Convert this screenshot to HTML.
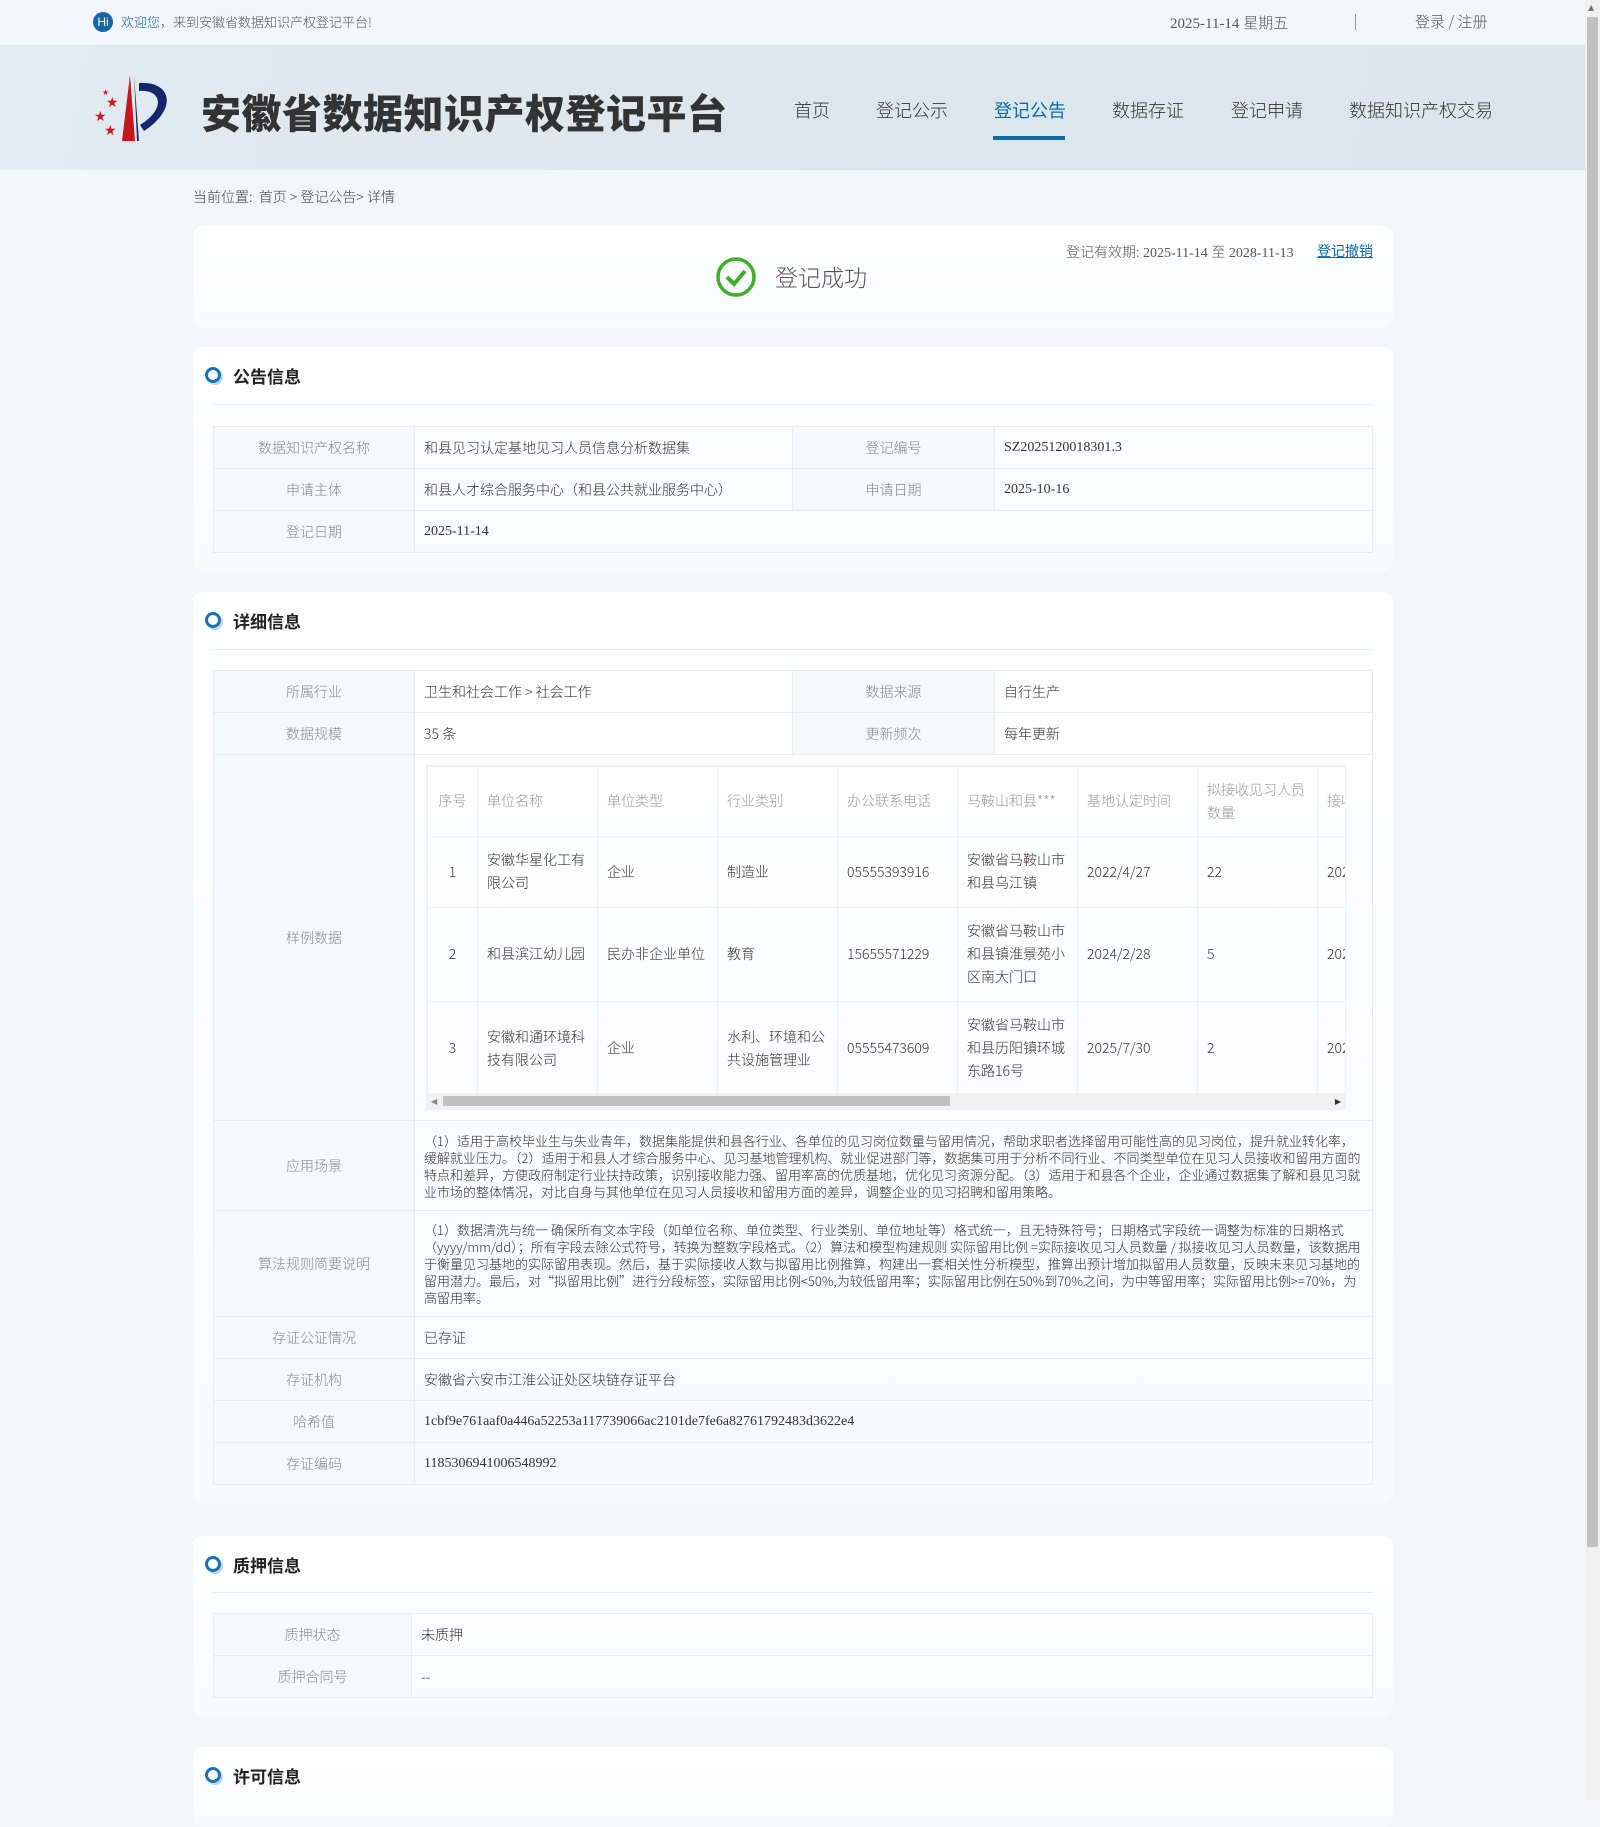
<!DOCTYPE html>
<html><head><meta charset="utf-8">
<style>
*{margin:0;padding:0;box-sizing:border-box}
body{width:1600px;height:1800px;overflow:hidden;background:#f3f6fa;font-family:"Liberation Serif","Noto Sans CJK SC",serif;color:#333;position:relative}
.cjk{font-family:"Noto Sans CJK SC","Liberation Sans",sans-serif}
.abs{position:absolute}
.top{position:absolute;left:0;top:0;width:1585px;height:45px;background:#f3f6fa;font-size:14px}
.hdr{position:absolute;left:0;top:45px;width:1585px;height:125px;background:linear-gradient(100deg,#e3ebf2 0%,#dde7ee 40%,#dbe5ec 100%)}
.nav{position:absolute;top:97px;font-size:18px;color:#333;font-family:"Noto Sans CJK SC",sans-serif;font-weight:300;white-space:nowrap}
.card{position:absolute;left:193px;width:1200px;background:linear-gradient(#fff,#f8fafd);border-radius:10px}
.ttl{position:absolute;left:20px;font-size:17px;font-weight:bold;color:#222;font-family:"Noto Sans CJK SC",sans-serif}
.ttl i{position:absolute;left:-8px;top:4px;width:16px;height:16px;border-radius:50%;border:3px solid #1a73b5;box-shadow:2px 2px 0 #b9d5ec}
.ttl span{margin-left:20px}
.hl{position:absolute;left:20px;width:1160px;height:1px;background:#e6ebf0}
table.g{position:absolute;left:20px;width:1160px;border-collapse:collapse;font-size:14px;font-family:"Noto Sans CJK SC",sans-serif;font-weight:300}
table.g td{border:1px solid #e7ecf1;padding:0 9px;color:#333;height:42px}
table.g td.l{background:#f5f9fc;color:#888;text-align:center}
.scene{font-size:13px;line-height:17px;padding:6px 9px!important;color:#333}
table.s{border-collapse:collapse;font-size:14px;font-family:"Noto Sans CJK SC",sans-serif;font-weight:300;table-layout:fixed;width:1040px}
table.s td{border:1px solid #eef1f4;padding:0 9px;line-height:23px;color:#333;vertical-align:middle}
table.s tr.h td{color:#999;height:70px}
</style></head><body>
<div class="top">
  <div class="abs" style="left:93px;top:12px;width:20px;height:20px;border-radius:50%;background:#1565a8;color:#fff;font:12px 'Liberation Sans',sans-serif;line-height:20px;text-align:center">Hi</div>
  <div class="abs cjk" style="left:121px;top:12px;font-size:13px;color:#555;font-weight:300"><span style="color:#1565a8">欢迎您</span>，来到安徽省数据知识产权登记平台!</div>
  <div class="abs" style="left:1170px;top:12px;font-size:15px;color:#555">2025-11-14 <span class="cjk" style="font-weight:300">星期五</span></div>
  <div class="abs" style="left:1355px;top:14px;width:1px;height:16px;background:#999"></div>
  <div class="abs cjk" style="left:1415px;top:11px;font-size:15px;color:#555;font-weight:300">登录 / 注册</div>
</div>
<div class="hdr">
  <svg class="abs" style="left:92px;top:28px" width="86" height="70" viewBox="0 0 86 70">
    <path d="M38 2 L43 68 L30 68 Z" fill="#c8161d"/>
    <path d="M42 2 L47 68 L45 68 Z" fill="#1a2a6e"/>
    <path d="M47 10 C80 8 86 36 52 58 L48 52 C74 36 70 16 47 18 Z" fill="#16266b"/>
    <g fill="#d4141b" font-size="14" font-family="DejaVu Sans">
      <text x="14" y="34">★</text><text x="2" y="48">★</text><text x="12" y="62">★</text><text x="10" y="22" font-size="8">★</text>
    </g>
  </svg>
  <div class="abs" style="left:201px;top:38px;font-size:40px;font-weight:900;color:#333;letter-spacing:0.5px;font-family:'Noto Sans CJK SC',sans-serif;line-height:56px;white-space:nowrap">安徽省数据知识产权登记平台</div>
</div>
<div class="nav" style="left:794px">首页</div>
<div class="nav" style="left:876px">登记公示</div>
<div class="nav" style="left:994px;color:#0b6aa9;font-weight:400">登记公告</div>
<div class="abs" style="left:993px;top:136px;width:72px;height:4px;background:#0b6aa9"></div>
<div class="nav" style="left:1112px">数据存证</div>
<div class="nav" style="left:1231px">登记申请</div>
<div class="nav" style="left:1349px">数据知识产权交易</div>

<div class="abs cjk" style="left:193px;top:187px;font-size:14px;color:#444;font-weight:300">当前位置:&nbsp; 首页 &gt; 登记公告&gt; 详情</div>

<div class="card" style="top:226px;height:101px">
  <svg class="abs" style="left:522px;top:30px" width="42" height="42" viewBox="0 0 42 42"><circle cx="21" cy="21" r="18" fill="none" stroke="#3fae29" stroke-width="3.5"/><path d="M12 21 L19 28 L30 15" fill="none" stroke="#3fae29" stroke-width="4"/></svg>
  <div class="abs cjk" style="left:582px;top:33px;font-size:23px;color:#555;font-weight:300">登记成功</div>
  <div class="abs" style="left:873px;top:16px;font-size:14px;color:#555"><span class="cjk" style="font-weight:300">登记有效期:</span> 2025-11-14 <span class="cjk" style="font-weight:300">至</span> 2028-11-13</div>
  <div class="abs cjk" style="left:1124px;top:15px;font-size:14px;color:#0b6aa9;text-decoration:underline">登记撤销</div>
</div>

<div class="card" style="top:347px;height:224px">
  <div class="ttl" style="top:16px"><i></i><span>公告信息</span></div>
  <div class="hl" style="top:57px"></div>
  <table class="g" style="top:79px">
    <tr><td class="l" style="width:201px">数据知识产权名称</td><td style="width:378px">和县见习认定基地见习人员信息分析数据集</td><td class="l" style="width:202px">登记编号</td><td style="font-family:'Liberation Serif',serif">SZ2025120018301.3</td></tr>
    <tr><td class="l">申请主体</td><td>和县人才综合服务中心（和县公共就业服务中心）</td><td class="l">申请日期</td><td style="font-family:'Liberation Serif',serif">2025-10-16</td></tr>
    <tr><td class="l">登记日期</td><td colspan="3" style="font-family:'Liberation Serif',serif">2025-11-14</td></tr>
  </table>
</div>

<div class="card" style="top:592px;height:912px">
  <div class="ttl" style="top:16px"><i></i><span>详细信息</span></div>
  <div class="hl" style="top:57px"></div>
  <table class="g" style="top:78px">
    <tr><td class="l" style="width:201px">所属行业</td><td style="width:378px">卫生和社会工作 &gt; 社会工作</td><td class="l" style="width:202px">数据来源</td><td>自行生产</td></tr>
    <tr><td class="l">数据规模</td><td>35 条</td><td class="l">更新频次</td><td>每年更新</td></tr>
    <tr><td class="l" style="height:366px">样例数据</td><td colspan="3" style="padding:10px 26px 10px 11px;vertical-align:top">
      <div style="width:920px;overflow:hidden;position:relative;height:345px;border:1px solid #eef1f4">
      <table class="s">
        <colgroup><col style="width:50px"><col style="width:120px"><col style="width:120px"><col style="width:120px"><col style="width:120px"><col style="width:120px"><col style="width:120px"><col style="width:120px"><col style="width:150px"></colgroup>
        <tr class="h"><td style="text-align:center;padding:0">序号</td><td>单位名称</td><td>单位类型</td><td>行业类别</td><td>办公联系电话</td><td>马鞍山和县***</td><td>基地认定时间</td><td>拟接收见习人员数量</td><td>接收见习时间</td></tr>
        <tr style="height:71px"><td style="text-align:center;padding:0">1</td><td>安徽华星化工有限公司</td><td>企业</td><td>制造业</td><td>05555393916</td><td>安徽省马鞍山市和县乌江镇</td><td>2022/4/27</td><td>22</td><td>2022</td></tr>
        <tr style="height:94px"><td style="text-align:center;padding:0">2</td><td>和县滨江幼儿园</td><td>民办非企业单位</td><td>教育</td><td>15655571229</td><td>安徽省马鞍山市和县镇淮景苑小区南大门口</td><td>2024/2/28</td><td>5</td><td>2024</td></tr>
        <tr style="height:94px"><td style="text-align:center;padding:0">3</td><td>安徽和通环境科技有限公司</td><td>企业</td><td>水利、环境和公共设施管理业</td><td>05555473609</td><td>安徽省马鞍山市和县历阳镇环城东路16号</td><td>2025/7/30</td><td>2</td><td>2025</td></tr>
      </table>
      <div class="abs" style="left:0;bottom:0;width:920px;height:16px;background:#f1f1f1"></div>
      <div class="abs" style="left:16px;bottom:3px;width:507px;height:10px;background:#c1c1c1"></div>
      <div class="abs" style="left:4px;bottom:3px;font-size:8px;color:#888;font-family:'DejaVu Sans'">◀</div>
      <div class="abs" style="right:4px;bottom:3px;font-size:8px;color:#333;font-family:'DejaVu Sans'">▶</div>
      </div>
    </td></tr>
    <tr><td class="l" style="height:90px">应用场景</td><td colspan="3" class="scene">（1）适用于高校毕业生与失业青年，数据集能提供和县各行业、各单位的见习岗位数量与留用情况，帮助求职者选择留用可能性高的见习岗位，提升就业转化率，缓解就业压力。（2）适用于和县人才综合服务中心、见习基地管理机构、就业促进部门等，数据集可用于分析不同行业、不同类型单位在见习人员接收和留用方面的特点和差异，方便政府制定行业扶持政策，识别接收能力强、留用率高的优质基地，优化见习资源分配。（3）适用于和县各个企业，企业通过数据集了解和县见习就业市场的整体情况，对比自身与其他单位在见习人员接收和留用方面的差异，调整企业的见习招聘和留用策略。</td></tr>
    <tr><td class="l" style="height:106px">算法规则简要说明</td><td colspan="3" class="scene">（1）数据清洗与统一 确保所有文本字段（如单位名称、单位类型、行业类别、单位地址等）格式统一，且无特殊符号；日期格式字段统一调整为标准的日期格式（yyyy/mm/dd）；所有字段去除公式符号，转换为整数字段格式。（2）算法和模型构建规则 实际留用比例 =实际接收见习人员数量 / 拟接收见习人员数量，该数据用于衡量见习基地的实际留用表现。然后，基于实际接收人数与拟留用比例推算，构建出一套相关性分析模型，推算出预计增加拟留用人员数量，反映未来见习基地的留用潜力。最后，对“拟留用比例”进行分段标签，实际留用比例&lt;50%,为较低留用率；实际留用比例在50%到70%之间，为中等留用率；实际留用比例&gt;=70%，为高留用率。</td></tr>
    <tr><td class="l">存证公证情况</td><td colspan="3">已存证</td></tr>
    <tr><td class="l">存证机构</td><td colspan="3">安徽省六安市江淮公证处区块链存证平台</td></tr>
    <tr><td class="l">哈希值</td><td colspan="3" style="font-family:'Liberation Serif',serif">1cbf9e761aaf0a446a52253a117739066ac2101de7fe6a82761792483d3622e4</td></tr>
    <tr><td class="l">存证编码</td><td colspan="3" style="font-family:'Liberation Serif',serif">1185306941006548992</td></tr>
  </table>
</div>

<div class="card" style="top:1536px;height:180px">
  <div class="ttl" style="top:16px"><i></i><span>质押信息</span></div>
  <div class="hl" style="top:56px"></div>
  <table class="g" style="top:77px">
    <tr><td class="l" style="width:198px">质押状态</td><td>未质押</td></tr>
    <tr><td class="l">质押合同号</td><td>--</td></tr>
  </table>
</div>

<div class="card" style="top:1747px;height:80px">
  <div class="ttl" style="top:16px"><i></i><span>许可信息</span></div>
</div>

<div class="abs" style="left:1585px;top:0;width:15px;height:1800px;background:#f1f1f1"></div>
<div class="abs" style="left:1587px;top:17px;width:11px;height:1530px;background:#c1c1c1"></div>
<div class="abs" style="left:1588px;top:3px;font-size:8px;color:#777;font-family:'DejaVu Sans'">▲</div>
</body></html>
